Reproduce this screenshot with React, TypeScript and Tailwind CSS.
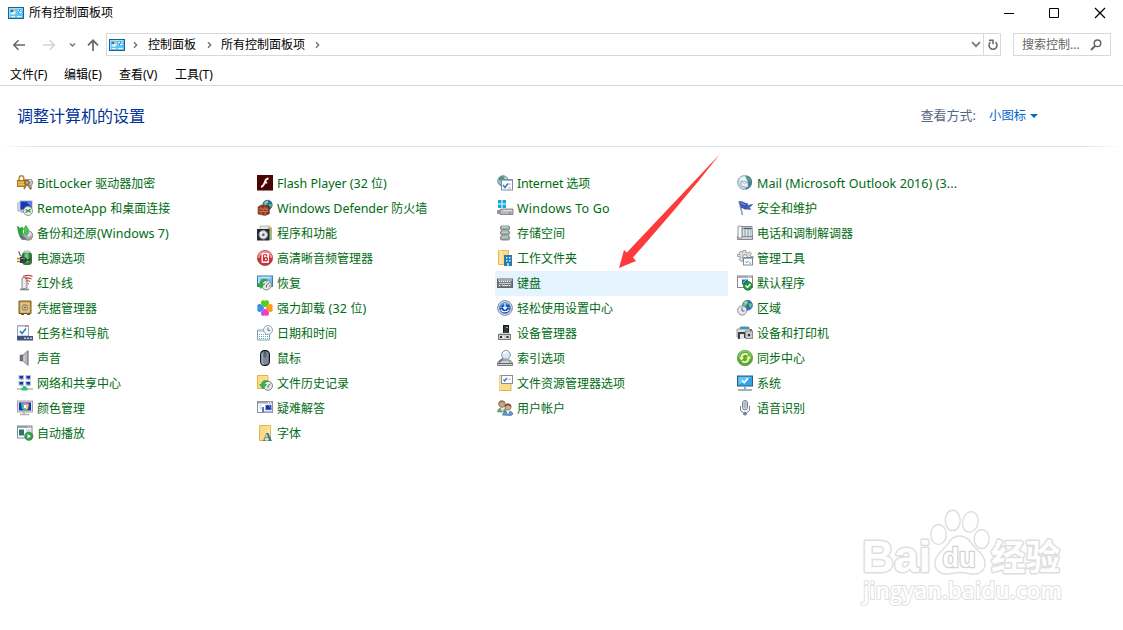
import React from "react";

type IconProps = { children: React.ReactNode };

function Icon({ children }: IconProps) {
  return (
    <svg width="16" height="16" viewBox="0 0 16 16" className="block shrink-0 overflow-visible" fill="none">
      {children}
    </svg>
  );
}

function ControlPanelIcon() {
  return (
    <svg width="16" height="12" viewBox="0 0 16 12" className="block shrink-0" fill="none">
      <rect x="0.5" y="0.5" width="15" height="11" fill="#5cc3f8" stroke="#17658f" />
      <path d="M1.5 10.5V1.500H14.500" stroke="#a5e0ff" />
      <circle cx="5" cy="5" r="2.700" fill="#e9f8ff" />
      <path d="M5 5V2.200A2.800 2.800 0 0 0 2.300 5.500Z" fill="#1680c8" />
      <path d="M5 5V2.200A2.800 2.800 0 0 1 7.700 5Z" fill="#f7b52b" />
      <path d="M9.500 3.500H13.500M9.500 5.500H13.500" stroke="#fff" />
      <path d="M11 3.500h1M10 5.500h1" stroke="#1474b7" />
      <path d="M3 9.500H7M9 9.500H13.500" stroke="#e7f8ff" />
      <path d="M7 9.500h1" stroke="#f7a52b" />
    </svg>
  );
}

const petal = "M8 7.200C5.200 6 3.600 4 4 2 4.500-.1 7-.2 8 .800 9-.2 11.500-.1 12 2 12.400 4 10.800 6 8 7.200z";

const icons: Record<string, React.ReactNode> = {
  bitlocker: (
    <>
      <path d="M7 4.500h7.500l1.500 3-1.500 3H8z" fill="#b9bbbd" stroke="#77797c" strokeWidth=".7" />
      <path d="M9 5.500h5" stroke="#eee" />
      <path d="M2.200 6V3a2.200 2.200 0 0 1 4.600 0V6" stroke="#b98a22" strokeWidth="1.500" />
      <rect x=".5" y="5.500" width="7.500" height="6" fill="#dba52f" stroke="#8e6417" strokeWidth=".8" />
      <path d="M1 7.500h6.500M1 9.500h6.500" stroke="#f6cf6b" strokeWidth=".7" />
      <circle cx="10" cy="7.500" r="2" stroke="#8a6a2c" strokeWidth="1.300" />
      <path d="M9.500 9.500L7 14M10.500 9.500l3.500 5" stroke="#9b7b3c" strokeWidth="1.600" />
      <path d="M14 11v3" stroke="#555" />
    </>
  ),
  remote: (
    <>
      <path d="M1 2v9h4" stroke="#8fa0b8" />
      <rect x="3" y="1" width="12" height="9" fill="#1737b8" stroke="#a9b2c0" />
      <path d="M9 1.500h5.500V7z" fill="#5d80e8" />
      <path d="M4 12h5" stroke="#9aa4ae" strokeWidth="1.500" />
      <circle cx="11" cy="11" r="4.500" fill="#e9eeea" stroke="#8f9998" />
      <path d="M8.700 9.500l2 1.600-2 1.600M13.500 9l-2 1.600 2 1.600" stroke="#27913a" strokeWidth="1.200" />
    </>
  ),
  backup: (
    <>
      <circle cx="11" cy="10.500" r="4.800" fill="#a5a9ad" stroke="#65686b" strokeWidth=".6" />
      <path d="M12 6.500a4 4 0 0 1 3 4l-3 .5z" fill="#d7d9db" />
      <circle cx="11.500" cy="10.500" r="1.300" fill="#eee" />
      <path d="M14 13l1 2-3-.5z" fill="#d88c77" />
      <path d="M2 11l3 4 5-.5-3-3z" fill="#6b7472" />
      <path d="M.5 1l2.500 2.500L5.500 2v9.500L3.800 12C1.500 10 1 6 .5 1z" fill="#27a83a" stroke="#147326" strokeWidth=".5" />
      <path d="M6 4.500L9 .300l2.700 4.500H10.500L10 10.500 7.500 8V4.500z" fill="#45d252" stroke="#198a2a" strokeWidth=".5" />
    </>
  ),
  power: (
    <>
      <path d="M1.500 1.500c2 1.500 0 4 3.500 5" stroke="#5c6672" strokeWidth="1.200" />
      <rect x="5.500" y="2.500" width="9" height="12" rx="2.500" fill="#1c8b31" stroke="#565f59" />
      <path d="M7.500 3.500h4v9h-4z" fill="#65d56d" />
      <rect x="7" y="1" width="6" height="2" rx="1" fill="#e4e9e7" stroke="#7a837e" strokeWidth=".6" />
      <path d="M0 8.500h3M0 11.500h3" stroke="#b88719" strokeWidth="1.300" />
      <path d="M3 7h4c2.500.5 3 1.500 3 3s-1 3-3 3H3z" fill="#38403e" />
      <path d="M4 8.500h4" stroke="#8c9591" />
      <path d="M10 10.500l4-1.500" stroke="#3a3f3d" strokeWidth="1.400" />
    </>
  ),
  infrared: (
    <>
      <path d="M5 3l5-1v11l-5 1z" fill="#d9dcdf" stroke="#85898e" strokeWidth=".9" />
      <path d="M7 3v10" stroke="#fff" />
      <path d="M3 14.500h9" stroke="#82868a" strokeWidth="1.600" />
      <path d="M6 1.500c4-1.500 7-1.500 9.500 0M8 3.800c3-1 5-1 6.500.3M9 6c2-.6 3-.4 4 .6" stroke="#c8403c" strokeWidth="1.100" />
      <path d="M10.500 8l1.500 1.200" stroke="#c8403c" />
    </>
  ),
  credential: (
    <>
      <path d="M2 1h12v12.500H2z" fill="#c79a4a" stroke="#7a5b26" />
      <rect x="4" y="3" width="8" height="9" fill="#d9b66c" stroke="#e7ce92" />
      <circle cx="8" cy="7.500" r="2.600" fill="#ece7da" stroke="#81724f" />
      <path d="M8 6v3M6.500 7.500h3" stroke="#675a3f" strokeWidth=".8" />
      <path d="M4 14.500h3M10 14.500h3" stroke="#705323" />
    </>
  ),
  taskbar: (
    <>
      <path d="M.5.500H11.500V11H.5z" fill="#fcfdff" stroke="#9da5b3" />
      <path d="M1 1.200h8" stroke="#b5bdc9" />
      <path d="M8 1.200h3" stroke="#d55" />
      <path d="M3 6l2 2.500 4-5" stroke="#2683c6" strokeWidth="1.600" />
      <path d="M0 11h16v4.500H0z" fill="#405477" />
      <path d="M7 13.300h2M10 13.300h2M13 13.300h2" stroke="#bccbe1" strokeWidth="1.400" />
    </>
  ),
  sound: (
    <>
      <path d="M3 5h3v6H3z" fill="#73777b" stroke="#505458" strokeWidth=".5" />
      <path d="M6 5l5-4.500v15L6 11z" fill="#b8bcc0" stroke="#73777b" strokeWidth=".7" />
      <path d="M10.800 1v14" stroke="#85898d" strokeWidth="1.300" />
      <path d="M7 6v5" stroke="#e5e7e9" />
    </>
  ),
  network: (
    <>
      {[2, 9].map((x) =>
        [0.5, 6.5].map((y) => (
          <g key={`${x}-${y}`}>
            <rect x={x} y={y} width="4.500" height="3.500" fill="#1737a8" stroke="#b2bfd5" />
            <path d={`M${x + 2} ${y + 4}h1.500`} stroke="#8491a5" />
          </g>
        )),
      )}
      <path d="M0 14h16" stroke="#c5cccc" strokeWidth="2" />
      <path d="M7.500 11v2.500M4.500 14h6" stroke="#2fc474" strokeWidth="3" />
    </>
  ),
  color: (
    <>
      <rect x=".5" y="1" width="15" height="11" fill="#e0e1df" stroke="#a3a49f" />
      <rect x="2" y="2.500" width="12" height="8" fill="#1836bd" />
      <path d="M4 3l4-.5v8L5 9z" fill="#29bfc8" />
      <path d="M7 2.500l5 1-3 3.500-3-1z" fill="#f16bc9" />
      <path d="M9 5l3-1-1 5-3 1.500z" fill="#f7cc4b" />
      <path d="M5 7l4-1v4.500z" fill="#53d762" />
      <path d="M7 5h2v3H7z" fill="#fff" />
      <path d="M7 12v2M3 14.500h9" stroke="#b4b5b0" strokeWidth="1.700" />
    </>
  ),
  autoplay: (
    <>
      <rect x=".5" y="1" width="14.500" height="12" fill="#fff" stroke="#858b91" />
      <path d="M1 2h14" stroke="#8a9198" strokeWidth="1.600" />
      <path d="M11 2h3" stroke="#eee" strokeDasharray="1 1" />
      <path d="M2 4.500h5v6H2z" fill="#2d7474" />
      <path d="M9 5h5M9 7h4" stroke="#b5bdc4" />
      <circle cx="11.800" cy="11.200" r="4.200" fill="#35a04b" stroke="#28783a" strokeWidth=".5" />
      <path d="M10.500 9v4.500l3.500-2.300z" fill="#fff" />
    </>
  ),
  flash: (
    <>
      <rect width="16" height="15.500" fill="#4a0404" />
      <path d="M11.500 3.500c-2.800 0-3 2-3.800 4S6 11.800 4 11.800M7.200 7.600h3" stroke="#fff" strokeWidth="1.800" />
    </>
  ),
  firewall: (
    <>
      <circle cx="10.500" cy="5" r="4.800" fill="#2864bd" stroke="#254475" strokeWidth=".5" />
      <path d="M7 2.500C9 .5 11 1 11.500 2L10 4.500 8 7 6.500 5zM12 3.500l3 1-1 3-2-1z" fill="#57c75a" />
      <path d="M8 2.500l3-1" stroke="#b8edff" />
      <path d="M1 7l3-2 8 1v8l-4 1.500L1 14z" fill="#983720" stroke="#662415" strokeWidth=".5" />
      <path d="M1.500 9h10M1.500 11.500h10M4 7v2M8 7v2M6 9v2.500M10 9v2.500M4 11.500v3M8 11.500v3.500" stroke="#ce9070" strokeWidth=".7" />
      <path d="M12 6v8" stroke="#54251b" />
    </>
  ),
  programs: (
    <>
      <path d="M3 1h10v10H3z" fill="#e3e7e6" stroke="#b9bdbd" />
      <path d="M11 2l4 .5v11.500h-4z" fill="#dca45a" />
      <path d="M12 6h3v9h-3z" fill="#9dbf86" />
      <path d="M0 4h12.500v11.500H0z" fill="#272a30" />
      <circle cx="6.300" cy="9.800" r="4.200" fill="#e0e4e8" stroke="#9ca4ae" />
      <circle cx="6.300" cy="9.800" r="1.300" fill="#545c68" />
      <path d="M3 7l2 2" stroke="#fff" />
    </>
  ),
  audio: (
    <>
      <circle cx="8" cy="8" r="7.600" fill="#ca3439" stroke="#983035" strokeWidth=".7" />
      <path d="M1.700 8a6.300 6.300 0 0 1 12.600 0" stroke="#f19291" strokeWidth="2" />
      <rect x="4.500" y="3" width="7.500" height="10" rx="1.200" fill="#fff5f2" />
      <path d="M6.500 4.500v7M7 4.800h2.500v1.700" stroke="#c9333b" strokeWidth="1.100" />
      <circle cx="8.800" cy="9.300" r="1.700" stroke="#b31f29" strokeWidth="1.200" />
    </>
  ),
  recovery: (
    <>
      <rect x=".5" y="1" width="15" height="10.500" fill="#71bdeb" stroke="#3e7ca9" />
      <path d="M2 9V2.500h12" stroke="#c4e8fb" strokeWidth="1.500" />
      <circle cx="9.500" cy="10" r="4.900" fill="#e3e9e7" stroke="#7a8583" />
      <path d="M9.500 10l3-2.500M9.500 10v2.500M7 9h1M9.500 6.500v1M12 11h1" stroke="#596463" />
      <path d="M10 5C6 3.500 3 5 2.500 9H0l4 4.500L7 9H5c.5-2 2-3 5-4z" fill="#2eaf42" stroke="#168128" strokeWidth=".5" />
    </>
  ),
  uninstall: (
    <>
      <path d={petal} fill="#55d012" />
      <path d={petal} fill="#ff9a1a" transform="rotate(90 8 8)" />
      <path d={petal} fill="#ea3fcf" transform="rotate(180 8 8)" />
      <path d={petal} fill="#3b90f2" transform="rotate(270 8 8)" />
    </>
  ),
  date: (
    <>
      <path d="M.5 5h12v10H.5z" fill="#fff" stroke="#8ba0ac" />
      <path d="M1 6h11" stroke="#bfcbd1" strokeWidth="1.500" />
      <path d="M2 9.500h9M2 11.500h9M2 13.500h9" stroke="#5cb3d0" strokeDasharray="1 1" />
      <circle cx="11" cy="5" r="4.500" fill="#edf3f8" stroke="#9aa7b4" />
      <path d="M11 2.500V5.500h2" stroke="#66778a" />
    </>
  ),
  mouse: (
    <>
      <rect x="3.600" y=".600" width="8.800" height="14.800" rx="3.800" fill="#7c8998" stroke="#131920" strokeWidth="1.200" />
      <path d="M5 3v9c0 1.500 1 2 2 2" stroke="#a3b3c1" strokeWidth="1.200" />
      <path d="M8 1v6" stroke="#303946" />
      <rect x="7.200" y="3" width="1.600" height="4" rx=".8" fill="#a9b7c4" stroke="#252d36" strokeWidth=".7" />
    </>
  ),
  history: (
    <>
      <path d="M.5.500H11v13H.5z" fill="#fbdc86" stroke="#e1b34c" />
      <path d="M9.500 1v10" stroke="#fff0b8" />
      <circle cx="11" cy="10.800" r="4.500" fill="#e3e9e7" stroke="#7a8583" />
      <path d="M11 10.800l2.500-2M11 10.800v2M8.500 10h1" stroke="#5c6664" />
      <path d="M11 6C7.500 4.500 4.500 6.500 4.500 9.500H2.500L6 14l3.200-4.500H7C7.500 8 8.500 7 11 6z" fill="#35b749" stroke="#198a2d" strokeWidth=".5" />
    </>
  ),
  troubleshoot: (
    <>
      <rect x=".5" y="1.500" width="15" height="11" fill="#fff" stroke="#8b8d97" />
      <path d="M1 2.500h14" stroke="#a0a2ab" strokeWidth="2" />
      <path d="M11 2.500h3" stroke="#fff" strokeDasharray="1 1" />
      <path d="M2 4.500h3V10H2z" fill="#dfe8f8" />
      <rect x="8.500" y="5" width="6" height="5" fill="#142fb6" stroke="#a9b5cb" strokeWidth=".7" />
      <path d="M7 12h9" stroke="#9da6b5" strokeWidth="1.500" />
      <path d="M5 7h2v5H5z" fill="#6276bd" />
      <path d="M12 5.500l2 3" stroke="#597ce2" />
    </>
  ),
  font: (
    <>
      <path d="M2.500.500H13.500V15.500H2.500z" fill="#fbdc86" stroke="#e1b34c" />
      <path d="M12 1v14" stroke="#fff0b8" />
      <text x="5.500" y="15.500" fontFamily="Liberation Serif, serif" fontWeight="700" fontSize="13" fill="#1772aa">A</text>
    </>
  ),
  internet: (
    <>
      <circle cx="6" cy="6" r="5.300" fill="#9cbbe2" stroke="#7e90ad" />
      <path d="M2 3l3-2 3 1-1 3-3 1-2-1zM2 8l3 2-1 1z" fill="#46a05c" />
      <path d="M7 2l3 2-1 2" fill="#e7f4ff" />
      <rect x="4.500" y="4.500" width="11" height="10.500" fill="#fcfdff" stroke="#7c8fa3" />
      <path d="M5 5.500h10" stroke="#a3b5c6" />
      <path d="M6 10l2 2.500 3-4" stroke="#2680c4" strokeWidth="1.500" />
      <path d="M11.500 9h2M11.500 13h2" stroke="#919ba6" />
    </>
  ),
  togo: (
    <>
      <path d="M1 0h3.500v3.500H1zM5.500 0H9v3.500H5.500zM1 4.500h3.500V8H1zM5.500 4.500H9V8H5.500z" fill="#13a9df" />
      <path d="M0 11h4M0 13h4" stroke="#707981" strokeWidth="1.500" />
      <path d="M5 9h11v5.500H3v-5z" fill="#b7bbbe" stroke="#72777c" strokeWidth=".8" />
      <path d="M6 10.500h9" stroke="#dfe2e3" />
      <path d="M12 13h2" stroke="#777" />
    </>
  ),
  storage: (
    <>
      {[1, 6, 11].map((y) => (
        <g key={y}>
          <rect x="3.500" y={y} width="9" height="4" rx="1.400" fill="#a4a6ab" stroke="#66696e" strokeWidth=".8" />
          <path d={`M5 ${y + 1}h6`} stroke="#e5e6e8" />
          <path d={`M9 ${y + 2.8}h2`} stroke="#42df48" strokeWidth="1.300" />
        </g>
      ))}
    </>
  ),
  workfolders: (
    <>
      <path d="M1.500.500h10v14h-10z" fill="#fbdc86" stroke="#e6b84f" />
      <path d="M2 1h2v13" stroke="#fff0b8" />
      <path d="M7 5h8v11H7z" fill="#247bb2" />
      <path d="M9 7h1.500v1.500H9zM12 7h1.500v1.500H12zM9 10h1.500v1.500H9zM12 10h1.500v1.500H12z" fill="#e4f6ff" />
      <path d="M10 13h2v3h-2z" fill="#9fd3ef" />
    </>
  ),
  keyboard: (
    <>
      <rect x=".5" y="4" width="15" height="8.500" fill="#777b80" stroke="#62666a" />
      <path d="M1 5h14" stroke="#dce0e4" />
      <path d="M2 6.500h12M2.500 8.500h12M2 10.500h2M12 10.500h2" stroke="#fff" strokeDasharray="1.200 .8" />
      <path d="M5 10.500h6" stroke="#dfe2e5" />
    </>
  ),
  ease: (
    <>
      <circle cx="8" cy="8" r="7.300" fill="#edf1f5" stroke="#717b91" />
      <circle cx="8" cy="8" r="5.600" fill="#1551bd" stroke="#4973b3" strokeWidth=".5" />
      <path d="M3.500 6.500a5 5 0 0 1 8-2" stroke="#69a4f1" strokeWidth="1.500" />
      <path d="M8 3.500v5.500M6 7l2 2 2-2" stroke="#fff" strokeWidth="1.300" />
      <path d="M4 9.500c1 3 6.500 3 8 0M3.500 7.500h1M11.500 7.500h1" stroke="#fff" strokeWidth="1.100" />
    </>
  ),
  device: (
    <>
      <rect x="6.500" y=".500" width="5" height="7.500" fill="#34383a" stroke="#17191a" />
      <path d="M9 2.500h2" stroke="#56df5d" />
      <path d="M3 8h9l1.500 2H1.500z" fill="#ececeb" stroke="#969896" strokeWidth=".5" />
      <rect x="1.500" y="9.500" width="12" height="5" fill="#d2d4d3" stroke="#777978" />
      <path d="M3 11h2v2H3zM9.500 11h2v2h-2z" fill="#303436" />
      <path d="M6.500 10.500v3" stroke="#eee" />
    </>
  ),
  indexing: (
    <>
      <path d="M3 10h10l2.500 3v2.500H.5V13z" fill="#cfd1d3" stroke="#777b80" />
      <path d="M1 13.500h14" stroke="#65696d" />
      <path d="M12 12h1" stroke="#35c047" strokeWidth="1.500" />
      <path d="M6 8.500l-4 4" stroke="#777c82" strokeWidth="1.800" />
      <circle cx="9" cy="4.800" r="4.300" fill="#dceaf5" stroke="#8093a4" />
      <path d="M6.500 4a3 3 0 0 1 4-2" stroke="#fff" strokeWidth="1.500" />
    </>
  ),
  folderOptions: (
    <>
      <path d="M2.500.500H14V15.500H2.500z" fill="#fbdc86" stroke="#e1b34c" />
      <path d="M3 1v14" stroke="#ffedaf" />
      <rect x="4.500" y=".500" width="11" height="8" fill="#fdfdff" stroke="#878e95" />
      <path d="M6.500 4.500l1.200 1.500 2.300-3" stroke="#2680c4" strokeWidth="1.300" />
      <path d="M11.500 4.500h2" stroke="#a5adb6" />
    </>
  ),
  users: (
    <>
      <circle cx="5" cy="4" r="3.300" fill="#c9a57c" stroke="#775733" strokeWidth=".6" />
      <path d="M1.500 5C1-.5 7-.5 8 3L4 2z" fill="#8b7a5a" />
      <path d="M.5 12c.5-5 7-6 9 0z" fill="#6fae7c" stroke="#4a7f5b" strokeWidth=".6" />
      <path d="M3.500 8l2 4 2-4" fill="#e5ead5" />
      <circle cx="11" cy="7" r="3.100" fill="#d9ad83" stroke="#775033" strokeWidth=".6" />
      <path d="M8 7c0-5 6-4 6.500 0L11 5z" fill="#5f4a37" />
      <path d="M5.500 15c1-5 9.500-5.500 10.500-1l-2 1.500z" fill="#5f98cd" stroke="#315b8b" strokeWidth=".6" />
      <path d="M9 10.500l2 4 2-4" fill="#e7edf2" />
    </>
  ),
  mail: (
    <>
      <circle cx="7.500" cy="7.500" r="6.900" fill="#c7dce7" stroke="#8fa6ba" />
      <path d="M8 1c4-1 7 2 7 6s-3 8-7 7l3-5-1-4z" fill="#427c9e" />
      <path d="M9 1c3 0 5 2 5.500 4l-3 2-2-2z" fill="#539c80" />
      <path d="M3 3l5-2 3 6-4 3-4-2z" fill="#e7f7ff" />
      <path d="M4 6l7 1v5.500l-7-1.500z" fill="#f1f6fa" stroke="#8191a5" strokeWidth=".7" />
      <path d="M4 6l3.500 3L11 7" stroke="#8fa1b3" strokeWidth=".7" />
    </>
  ),
  flag: (
    <>
      <path d="M2 1l3.500 14" stroke="#939daf" strokeWidth="1.500" />
      <path d="M2.500 2c3-1.500 5 2 8 1.500L9.500 9C7 10 6 7 4.500 8z" fill="#3e59b8" stroke="#2a408f" strokeWidth=".6" />
      <path d="M10 5.500l5.500-1-3 3 1 2-4-.5z" fill="#4b6bcf" stroke="#2a408f" strokeWidth=".6" />
      <path d="M3.500 3c2 0 3 1.500 5 1.500" stroke="#839be4" />
    </>
  ),
  phone: (
    <>
      <path d="M5 1.500h10l.5 10.500H5z" fill="#e3e6e8" stroke="#85898c" />
      <path d="M.5 11.500h15v3H.5z" fill="#cdd0d2" stroke="#85898c" />
      <rect x="1" y="1" width="4" height="12" rx="1" fill="#f3f5f6" stroke="#7b7f82" strokeWidth=".8" />
      <path d="M6.500 3.500h8" stroke="#315d7c" strokeWidth="1.500" />
      <path d="M7 6h7M7 8h7M7 10h7" stroke="#7d93a3" strokeDasharray="2 1" />
    </>
  ),
  tools: (
    <>
      <path d="M6 .5h3v2l2 .7 1.700-1.500 1.800 2L13 5l.7 1.500H16V9h-2v5H9v-2H6v-2l-2 1.500-2-2L3.500 8 3 6.500H.500V4.500h2.300L2 3l2-2 1.500 1.300z" fill="#d8dcde" stroke="#8b9195" strokeWidth=".8" />
      <circle cx="8" cy="7" r="2.300" fill="#fff" stroke="#92979b" />
      <rect x="6.500" y="7.500" width="9" height="7.500" fill="#fff" stroke="#7f8a95" />
      <path d="M7 8.500h8" stroke="#a1a9b1" />
      <path d="M8.500 11.500l1.200 1.200 2-2M12.500 13h1.500" stroke="#2c7bb8" />
    </>
  ),
  defaults: (
    <>
      <rect x=".5" y="1" width="15" height="11.500" fill="#fff" stroke="#858b91" />
      <path d="M1 2h14" stroke="#92999f" strokeWidth="1.500" />
      <path d="M11 2h3" stroke="#fff" strokeDasharray="1 1" />
      <path d="M5 4.500h6v5H5z" fill="#2872a5" />
      <path d="M6 8l3-3" stroke="#87c6e3" />
      <circle cx="10.800" cy="10.800" r="4.400" fill="#1e9939" stroke="#126b27" strokeWidth=".7" />
      <path d="M8.500 10.500l2 2 3-3.500" stroke="#fff" strokeWidth="1.500" />
    </>
  ),
  region: (
    <>
      <circle cx="10.500" cy="5.300" r="5" fill="#2c6bc7" stroke="#264b8b" strokeWidth=".5" />
      <path d="M7 1.500l3-1 1 3-3 3-2-1zM12 3l3 1-1 4-2-2z" fill="#66cf55" />
      <path d="M7.500 3l3-1" stroke="#adf0ff" />
      <circle cx="5.200" cy="10.500" r="4.600" fill="#e5e9ed" stroke="#8a9197" />
      <path d="M5 7.500v3.500h2.500" stroke="#596573" />
    </>
  ),
  printers: (
    <>
      <path d="M3 2h9v3H3z" fill="#26a6ca" stroke="#597d8d" strokeWidth=".5" />
      <path d="M5 1.500h5" stroke="#80d5de" />
      <path d="M0 4h13l1 3v5H0z" fill="#dfe2e2" stroke="#74787b" strokeWidth=".7" />
      <path d="M1 7h8v6H6V9H3v5H1z" fill="#3d4144" />
      <path d="M3 9h4v5H3z" fill="#e5e5e4" />
      <rect x="8.500" y="6" width="7" height="7.500" fill="#c3c9cc" stroke="#868d90" />
      <circle cx="12" cy="10" r="2" fill="#30373d" stroke="#dbe5e8" />
      <path d="M13 5h2" stroke="#444" strokeWidth="1.500" />
    </>
  ),
  sync: (
    <>
      <circle cx="8" cy="8" r="7.700" fill="#55ac42" stroke="#3d8b32" strokeWidth=".6" />
      <path d="M2 7a6 6 0 0 1 12 0" stroke="#86c76e" strokeWidth="1.500" />
      <path d="M4.500 8C4.500 4 8.500 2.800 10.800 5M11.500 8c0 4-4 5.200-6.300 3" stroke="#fff49d" strokeWidth="1.900" />
      <path d="M1.800 7.500h5.200L4.500 10.500zM9 8.500h5.200l-2.600-3z" fill="#fff49d" />
    </>
  ),
  system: (
    <>
      <rect x=".5" y="1" width="15" height="10" fill="#30a5e8" stroke="#315c79" />
      <path d="M1.500 10V2h13z" fill="#65c6f8" />
      <path d="M5 5.500l2.200 2.200 3.800-4.500" stroke="#fff" strokeWidth="1.600" />
      <path d="M7 12h2v2H7z" fill="#91abbc" />
      <path d="M1 15h14" stroke="#8199a9" strokeWidth="1.500" />
    </>
  ),
  speech: (
    <>
      <rect x="5.500" y=".500" width="5" height="9.500" rx="2.500" fill="#edf0f7" stroke="#737b94" />
      <path d="M6 3h4M6 5h4M6 7h4M8 1v8" stroke="#9298aa" strokeWidth=".8" />
      <path d="M3.500 6v3c0 3 2 3.500 4.500 3.500s4.500-.5 4.500-3.500V6" stroke="#767f99" />
      <path d="M8 12.500v3M6 14h4" stroke="#697291" strokeWidth="1.300" />
    </>
  ),
};

type Item = { icon: string; label: string; active?: boolean; tracking?: string };

const columns: Item[][] = [
  [
    { icon: "bitlocker", label: "BitLocker 驱动器加密", tracking: "tracking-[0px]" },
    { icon: "remote", label: "RemoteApp 和桌面连接", tracking: "tracking-[0.1px]" },
    { icon: "backup", label: "备份和还原(Windows 7)", tracking: "tracking-[0.05px]" },
    { icon: "power", label: "电源选项" },
    { icon: "infrared", label: "红外线" },
    { icon: "credential", label: "凭据管理器" },
    { icon: "taskbar", label: "任务栏和导航" },
    { icon: "sound", label: "声音" },
    { icon: "network", label: "网络和共享中心" },
    { icon: "color", label: "颜色管理" },
    { icon: "autoplay", label: "自动播放" },
  ],
  [
    { icon: "flash", label: "Flash Player (32 位)", tracking: "tracking-[-0.04px]" },
    { icon: "firewall", label: "Windows Defender 防火墙", tracking: "tracking-[-0.04px]" },
    { icon: "programs", label: "程序和功能" },
    { icon: "audio", label: "高清晰音频管理器" },
    { icon: "recovery", label: "恢复" },
    { icon: "uninstall", label: "强力卸载 (32 位)" },
    { icon: "date", label: "日期和时间" },
    { icon: "mouse", label: "鼠标" },
    { icon: "history", label: "文件历史记录" },
    { icon: "troubleshoot", label: "疑难解答" },
    { icon: "font", label: "字体" },
  ],
  [
    { icon: "internet", label: "Internet 选项", tracking: "tracking-[-0.22px]" },
    { icon: "togo", label: "Windows To Go" },
    { icon: "storage", label: "存储空间" },
    { icon: "workfolders", label: "工作文件夹" },
    { icon: "keyboard", label: "键盘", active: true },
    { icon: "ease", label: "轻松使用设置中心" },
    { icon: "device", label: "设备管理器" },
    { icon: "indexing", label: "索引选项" },
    { icon: "folderOptions", label: "文件资源管理器选项" },
    { icon: "users", label: "用户帐户" },
  ],
  [
    { icon: "mail", label: "Mail (Microsoft Outlook 2016) (3...", tracking: "tracking-[0.08px]" },
    { icon: "flag", label: "安全和维护" },
    { icon: "phone", label: "电话和调制解调器" },
    { icon: "tools", label: "管理工具" },
    { icon: "defaults", label: "默认程序" },
    { icon: "region", label: "区域" },
    { icon: "printers", label: "设备和打印机" },
    { icon: "sync", label: "同步中心" },
    { icon: "system", label: "系统" },
    { icon: "speech", label: "语音识别" },
  ],
];

/* Latin runs are set slightly larger and tracked apart from the Chinese ones. */
function Label({ text, tracking = "tracking-[0.2px]" }: { text: string; tracking?: string }) {
  const runs = text.match(/[\x20-\x7e]+|[^\x20-\x7e]+/g) ?? [];
  return (
    <span className="whitespace-pre text-[12px] leading-[25px] text-[#006b12]">
      {runs.map((run, i) => (
        <span key={i} className={/^[\x20-\x7e]/.test(run) ? `text-[12.5px] ${tracking}` : ""}>
          {run}
        </span>
      ))}
    </span>
  );
}

function Crumb() {
  return (
    <svg width="5" height="8" viewBox="0 0 5 8" fill="none" className="block shrink-0">
      <path d="M1 1.200L3.700 4 1 6.800" stroke="#6b6b6b" strokeWidth="1.300" />
    </svg>
  );
}

function Watermark() {
  return (
    <svg
      width="220"
      height="110"
      viewBox="850 500 220 110"
      className="absolute left-[850px] top-[500px]"
      fill="#fff"
      stroke="#dedede"
      strokeWidth="1.400"
    >
      <g paintOrder="stroke" strokeLinejoin="round">
        <text x="862" y="572" fontFamily="Liberation Sans, sans-serif" fontWeight="700" fontSize="45" textLength="69" lengthAdjust="spacingAndGlyphs" strokeWidth="3">Bai</text>
        <text x="991" y="570" fontFamily="Noto Sans CJK SC, sans-serif" fontWeight="700" fontSize="35" textLength="69" lengthAdjust="spacingAndGlyphs" strokeWidth="3">经验</text>
        <text x="863" y="599" fontFamily="Open Sans, sans-serif" fontWeight="600" fontSize="23" strokeWidth="2" stroke="#e0e0e0" textLength="199" lengthAdjust="spacingAndGlyphs">jingyan.baidu.com</text>
      </g>
      <ellipse cx="938.500" cy="534.500" rx="7.700" ry="10" />
      <ellipse cx="952.700" cy="520.500" rx="7.500" ry="10.300" />
      <ellipse cx="970.300" cy="522" rx="7.800" ry="10.300" transform="rotate(12 970.3 522)" />
      <ellipse cx="981.700" cy="539" rx="7.500" ry="9.500" />
      <path d="M959.500 536c-6 0-9 3-11.500 8-3 5-12 9-13 18-.5 8 5 12.500 12 12 5-.3 8-1.500 12.500-1.500s8 1.200 13 1.500c8 .4 13-4 12.500-12-.8-8.500-9-12-13-18-3.500-5-6.500-8-12.500-8z" />
      <text x="942.500" y="567" fontFamily="Liberation Sans, sans-serif" fontWeight="700" fontSize="28" textLength="33" lengthAdjust="spacingAndGlyphs" strokeWidth="2.600" paintOrder="stroke" stroke="#d2d2d2">du</text>
    </svg>
  );
}

export default function App() {
  return (
    <div className="relative h-[630px] w-[1123px] overflow-hidden bg-white font-['Noto_Sans','Noto_Sans_CJK_SC',sans-serif] text-[12px] text-black">
      <header className="flex h-[26px] items-center pl-2 pb-px">
        <ControlPanelIcon />
        <span className="ml-[5px] leading-[26px]">所有控制面板项</span>
        <svg width="102" height="12" viewBox="0 0 102 12" fill="none" stroke="#000" className="ml-auto mr-[17px]">
          <path d="M0 6.500h10" />
          <path d="M45.500 1.500h9v9h-9z" />
          <path d="M91 1l10 10M101 1L91 11" strokeWidth="1.200" />
        </svg>
      </header>

      <div className="mt-[7px] flex h-[23px] items-center">
        <svg width="92" height="14" viewBox="0 0 92 14" fill="none" className="ml-[12px] mr-[2px] shrink-0">
          <path d="M13 7H2M6.500 2.300L1.800 7l4.700 4.700" stroke="#666" strokeWidth="1.500" />
          <path d="M31 7h11M37.700 2.300L42.400 7l-4.700 4.700" stroke="#d4d4d4" strokeWidth="1.500" />
          <path d="M58 5.500l2.500 2.500L63 5.500" stroke="#777" strokeWidth="1.500" />
          <path d="M81 13V2.500M76 7.300l5-5 5 5" stroke="#666" strokeWidth="1.700" />
        </svg>
        <div className="flex h-[23px] w-[895px] items-center border border-[#d9d9d9] pl-[2px]">
          <ControlPanelIcon />
          <div className="ml-2 flex items-center">
            <Crumb />
            <span className="ml-[10px] mr-[11px] leading-5">控制面板</span>
            <Crumb />
            <span className="ml-[9px] mr-[10px] leading-5">所有控制面板项</span>
            <Crumb />
          </div>
          <svg width="10" height="7" viewBox="0 0 10 7" fill="none" className="ml-auto mr-[2px]">
            <path d="M1 1l4 4.200L9 1" stroke="#777" strokeWidth="1.800" />
          </svg>
          <div className="flex h-full w-[17px] items-center justify-end border-l border-[#d9d9d9] pr-px">
            <svg width="12" height="12" viewBox="0 0 12 12" fill="none" stroke="#666" strokeWidth="1.500">
              <path d="M8.500 3.200a4 4 0 1 1-5 0" />
              <path d="M2 1.200h4v4" />
            </svg>
          </div>
        </div>
        <div className="ml-[12px] flex h-[23px] w-[98px] items-center border border-[#d9d9d9] pl-[8px] text-[#666]">
          <span className="leading-5">搜索控制...</span>
          <svg width="12" height="12" viewBox="0 0 12 12" fill="none" stroke="#666" className="ml-auto mr-[8px]">
            <circle cx="7.500" cy="4.300" r="3.300" strokeWidth="1.500" />
            <path d="M5 7L1 11" strokeWidth="1.900" />
          </svg>
        </div>
      </div>

      <nav className="flex h-[30px] items-end border-b border-[#d5d5d5] pl-[10px] leading-[20px]">
        <span className="w-[54px]">文件(F)</span>
        <span className="w-[55px]">编辑(E)</span>
        <span className="w-[56px]">查看(V)</span>
        <span>工具(T)</span>
      </nav>

      <section className="flex h-[60px] items-center pl-[17px]">
        <h1 className="text-[16px] leading-6 text-[#003399]">调整计算机的设置</h1>
        <div className="ml-auto mr-[85px] flex items-center">
          <span className="text-[13px] text-[#55677f]">查看方式:</span>
          <span className="ml-[13px] text-[12.300px] text-[#0066cc]">小图标</span>
          <svg width="8" height="4" viewBox="0 0 8 4" className="ml-1">
            <path d="M0 0h8L4 4z" fill="#0066cc" />
          </svg>
        </div>
      </section>
      <div className="flex h-px">
        <div className="w-[40px] bg-linear-to-r from-white to-[#d3e5f3]" />
        <div className="flex-1 bg-[#d3e5f3]" />
        <div className="w-[40px] bg-linear-to-r from-[#d3e5f3] to-white" />
      </div>

      <main className="mt-[24px] grid grid-cols-[240px_240px_240px_240px] pl-[15px]">
        {columns.map((items, c) => (
          <ul key={c}>
            {items.map((item) => (
              <li
                key={item.icon}
                className={`flex h-[25px] w-[233px] pl-[2px] ${item.active ? "bg-[#e5f3ff]" : ""}`}
              >
                <div className="mr-1 mt-1">
                  <Icon>{icons[item.icon]}</Icon>
                </div>
                <Label text={item.label} tracking={item.tracking} />
              </li>
            ))}
          </ul>
        ))}
      </main>

      <svg width="110" height="120" viewBox="615 150 110 120" className="absolute left-[615px] top-[150px]">
        <path d="M720 154L626.800 252.500 624 250 619 268 636 261 633 257.500C660 227 692 190 720 154z" fill="#fd3b3b" />
      </svg>
      <Watermark />
    </div>
  );
}
